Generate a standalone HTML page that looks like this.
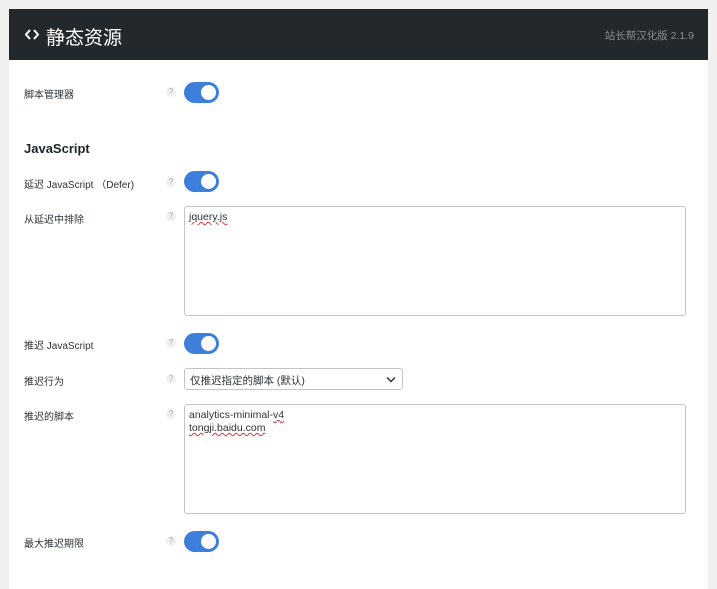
<!DOCTYPE html>
<html><head><meta charset="utf-8"><style>
body{margin:0;width:717px;height:576px;background:#f0f0f1;font-family:"Liberation Sans","Noto Sans CJK SC",sans-serif;overflow:hidden;position:relative}
.panel{position:absolute;left:9px;top:9px;width:699px;height:580px;background:#fff}
.hdr{position:absolute;left:9px;top:9px;width:699px;height:51px;background:#23282d}
.hdr .t{position:absolute;left:37px;top:14px;color:#fff;font-size:19px}
.hdr .v{position:absolute;right:14px;top:19px;color:#8c8f94;font-size:10.5px}
.lbl{position:absolute;left:24px;font-size:10px;color:#2c3338}
.q{position:absolute;left:166px;width:10px;height:10px;border-radius:50%;background:#f0f0f1;color:#a7aaad;font-size:8px;text-align:center;line-height:10px}
.tg{position:absolute;left:184px;width:35px;height:21px;border-radius:11px;background:#3f7fdc}
.tg::after{content:"";position:absolute;right:3px;top:3px;width:15px;height:15px;border-radius:50%;background:#fff}
.ta{position:absolute;left:184px;width:502px;border:1px solid #c3c4c7;border-radius:3px;font-size:10.5px;color:#2c3338;padding:4px 4px;box-sizing:border-box;line-height:13px}
.sq{text-decoration:underline wavy #d63638;text-decoration-thickness:1px}
h3{position:absolute;left:24px;top:141px;margin:0;font-size:13px;font-weight:bold;color:#1d2327}
.sel{position:absolute;left:184px;top:368px;width:219px;height:22px;border:1px solid #c3c4c7;border-radius:3px;box-sizing:border-box;font-size:10.5px;color:#2c3338;padding:4px 5px}
</style></head><body>
<div class="panel"></div>
<div class="hdr"><svg style="position:absolute;left:16px;top:20px" width="14" height="11" viewBox="0 0 14 11"><path d="M5 1L1 5.5L5 10M9 1L13 5.5L9 10" fill="none" stroke="#fff" stroke-width="2"/></svg><span class="t">静态资源</span><span class="v">站长帮汉化版 2.1.9</span></div>
<div class="lbl" style="top:86px">脚本管理器</div><div class="q" style="top:87px">?</div><div class="tg" style="top:82px"></div>
<h3>JavaScript</h3>
<div class="lbl" style="top:176px">延迟 JavaScript （Defer)</div><div class="q" style="top:177px">?</div><div class="tg" style="top:171px"></div>
<div class="lbl" style="top:211px">从延迟中排除</div><div class="q" style="top:211px">?</div>
<div class="ta" style="top:206px;height:110px"><span class="sq">jquery.js</span></div>
<div class="lbl" style="top:337px">推迟 JavaScript</div><div class="q" style="top:338px">?</div><div class="tg" style="top:333px"></div>
<div class="lbl" style="top:373px">推迟行为</div><div class="q" style="top:374px">?</div>
<div class="sel">仅推迟指定的脚本 (默认)<svg style="position:absolute;right:6px;top:7px" width="10" height="7" viewBox="0 0 10 7"><path d="M1 1.5L5 5.5L9 1.5" fill="none" stroke="#2c3338" stroke-width="1.5"/></svg></div>
<div class="lbl" style="top:408px">推迟的脚本</div><div class="q" style="top:409px">?</div>
<div class="ta" style="top:404px;height:110px">analytics-minimal-<span class="sq">v4</span><br><span class="sq">tongji.baidu.com</span></div>
<div class="lbl" style="top:535px">最大推迟期限</div><div class="q" style="top:536px">?</div><div class="tg" style="top:531px"></div>
</body></html>
